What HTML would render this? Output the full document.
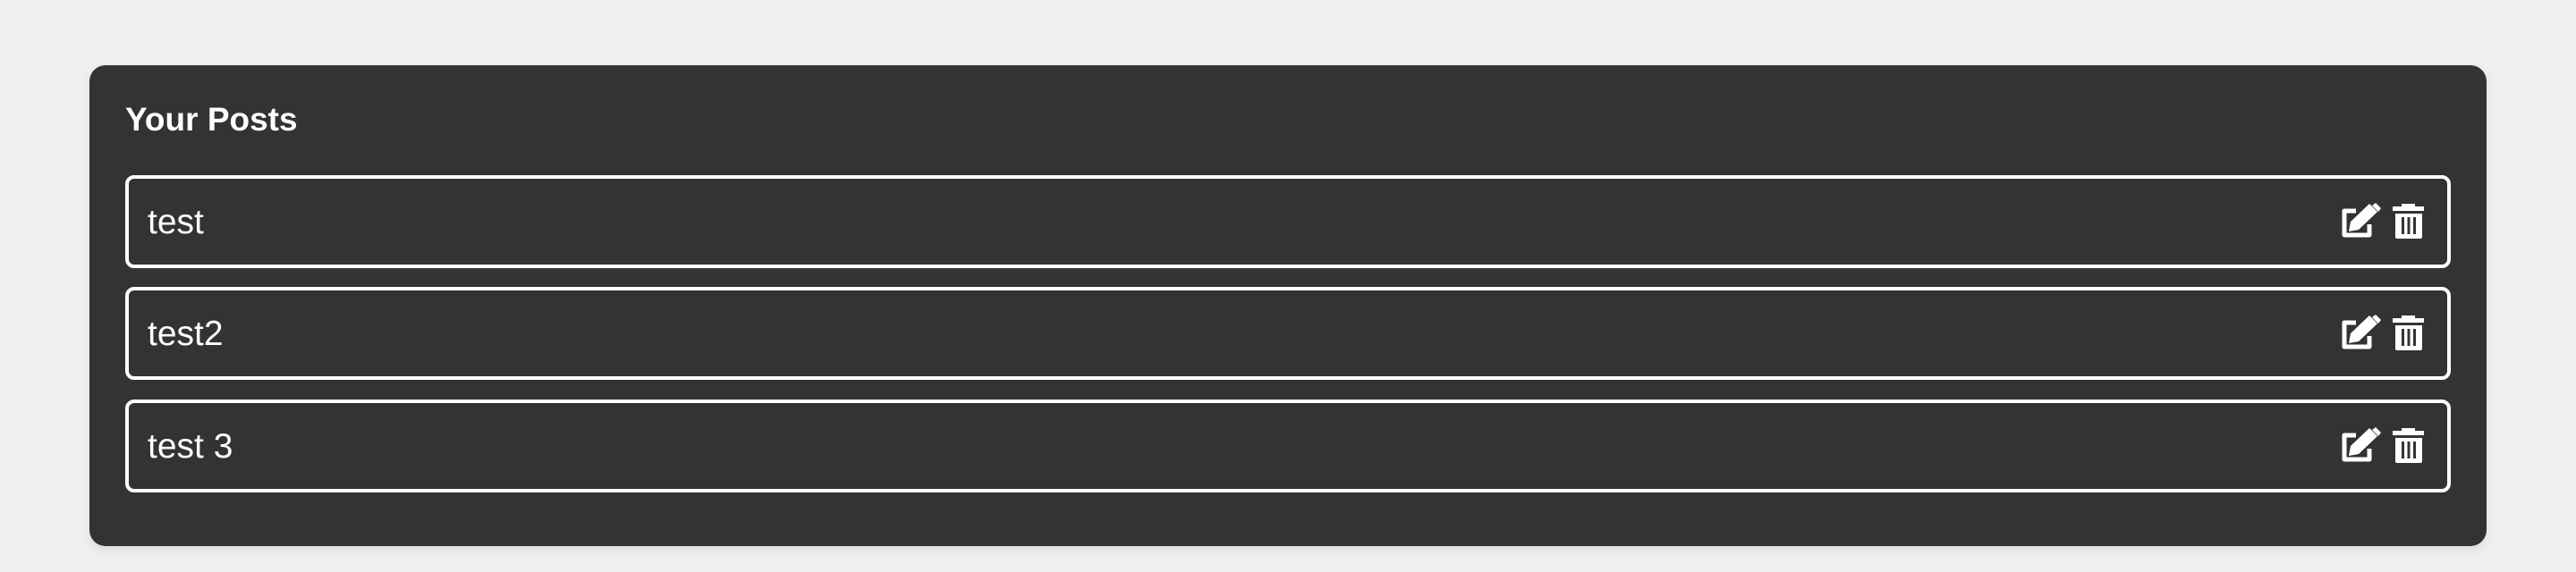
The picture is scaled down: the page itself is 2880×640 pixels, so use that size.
<!DOCTYPE html>
<html><head><style>
html,body{margin:0;padding:0;background:#efefef;width:2880px;height:640px;overflow:hidden;font-family:"Liberation Sans",Arial,sans-serif}
.panel{position:absolute;left:100px;top:73px;width:2680px;height:538px;background:#333;border-radius:18px;box-shadow:0 4px 12px rgba(0,0,0,0.08)}
h2{position:absolute;left:40px;top:39px;margin:0;color:#fff;font-size:37px;font-weight:bold;line-height:44px}
.row{position:absolute;left:40px;width:2592px;height:96px;border:4px solid #fff;border-radius:10px;color:#fff;font-size:39px;box-sizing:content-box}
.row span{position:absolute;left:21px;top:27px;line-height:44px}
.row svg{position:absolute;left:2470px;top:27px}
</style></head><body>
<div class="panel">
<h2>Your Posts</h2>
<div class="row" style="top:123px"><span>test</span><svg width="100" height="50" viewBox="0 0 100 50"><path d="M20 9H7V36H35V24" fill="none" stroke="#fff" stroke-width="5" stroke-linejoin="round"/><path d="M12 32L14 21L35 1L44 10L23 30Z" fill="#fff"/><path d="M38 -1L42 -4L48 2L45 6Z" fill="#fff" transform="translate(0,4)"/><path d="M61 4H96V9H61Z M71 1H86V4H71Z" fill="#fff"/><path fill="#fff" fill-rule="evenodd" d="M64 12H94V38Q94 40 92 40H66Q64 40 64 38Z M71 16V35H74V16Z M77.5 16V35H80.5V16Z M84 16V35H87V16Z"/></svg></div>
<div class="row" style="top:248px"><span>test2</span><svg width="100" height="50" viewBox="0 0 100 50"><path d="M20 9H7V36H35V24" fill="none" stroke="#fff" stroke-width="5" stroke-linejoin="round"/><path d="M12 32L14 21L35 1L44 10L23 30Z" fill="#fff"/><path d="M38 -1L42 -4L48 2L45 6Z" fill="#fff" transform="translate(0,4)"/><path d="M61 4H96V9H61Z M71 1H86V4H71Z" fill="#fff"/><path fill="#fff" fill-rule="evenodd" d="M64 12H94V38Q94 40 92 40H66Q64 40 64 38Z M71 16V35H74V16Z M77.5 16V35H80.5V16Z M84 16V35H87V16Z"/></svg></div>
<div class="row" style="top:374px"><span>test 3</span><svg width="100" height="50" viewBox="0 0 100 50"><path d="M20 9H7V36H35V24" fill="none" stroke="#fff" stroke-width="5" stroke-linejoin="round"/><path d="M12 32L14 21L35 1L44 10L23 30Z" fill="#fff"/><path d="M38 -1L42 -4L48 2L45 6Z" fill="#fff" transform="translate(0,4)"/><path d="M61 4H96V9H61Z M71 1H86V4H71Z" fill="#fff"/><path fill="#fff" fill-rule="evenodd" d="M64 12H94V38Q94 40 92 40H66Q64 40 64 38Z M71 16V35H74V16Z M77.5 16V35H80.5V16Z M84 16V35H87V16Z"/></svg></div>
</div>
</body></html>
